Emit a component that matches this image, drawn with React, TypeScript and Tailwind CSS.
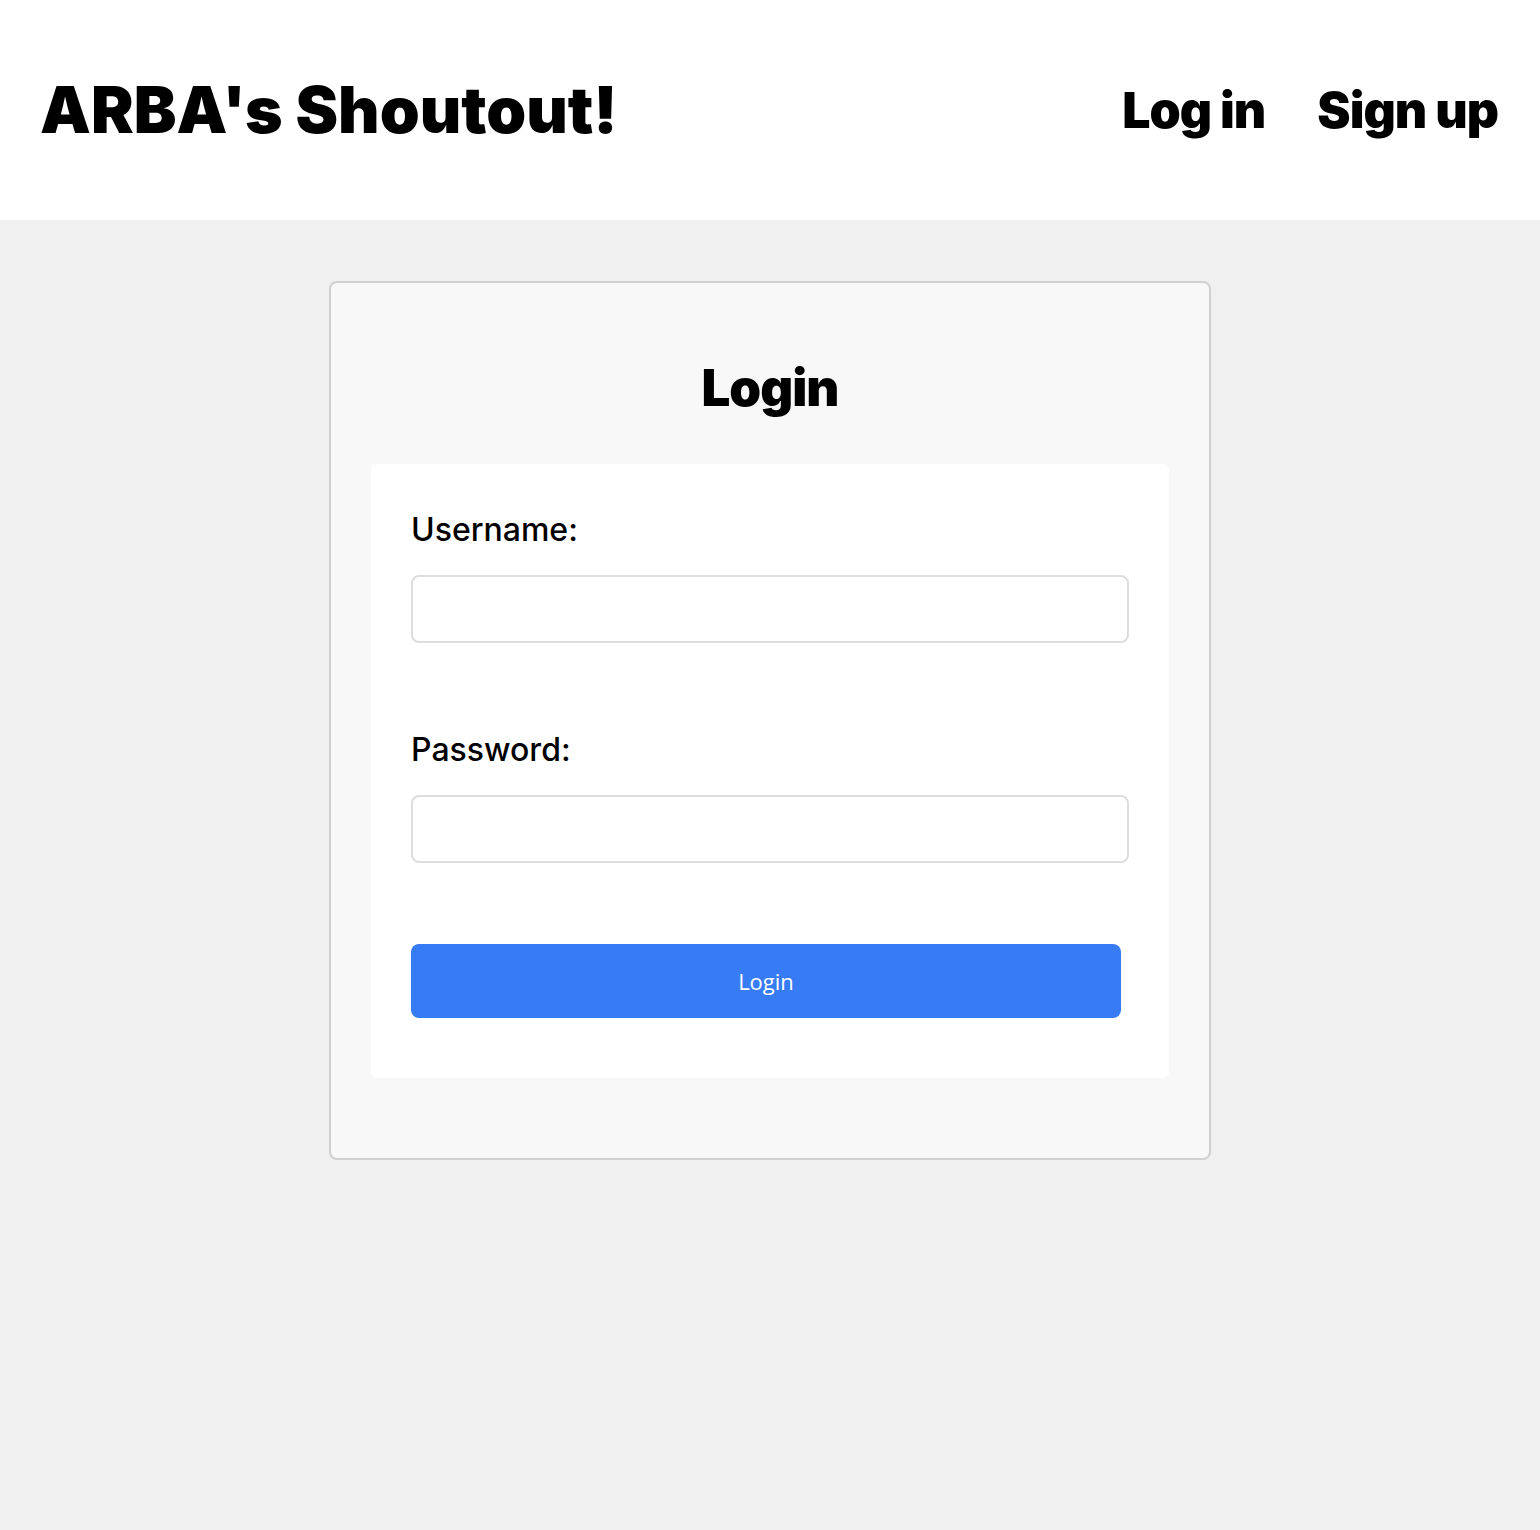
export default function App() {
  return (
    <div className="min-h-[1530px] flex flex-col bg-[#f0f0f0] font-['Inter',sans-serif] text-black">
      <header className="h-[220px] bg-white flex items-center justify-between px-[40px]">
        <h1 className="text-[64px] font-black leading-none">ARBA's Shoutout!</h1>
        <nav className="flex items-center gap-[52px] pr-[2px]">
          <a className="text-[50px] font-black leading-none tracking-[-1px]">Log in</a>
          <a className="text-[50px] font-black leading-none tracking-[-1px]">Sign up</a>
        </nav>
      </header>

      <main className="flex-1 pt-[61px]">
        <div className="w-[882px] mx-auto bg-[#f8f8f8] border-2 border-[#d0d0d0] rounded-[8px] px-[40px] pt-[79px] pb-[80px]">
          <h2 className="text-center text-[51px] font-black leading-none tracking-[-1px]">Login</h2>

          <form className="mt-[51px] bg-white rounded-[6px] px-[40px] pt-[50px] pb-[60px]">
            <label className="block text-[32px] font-medium leading-none">Username:</label>
            <input type="text" className="block w-full h-[68px] mt-[29px] border-2 border-[#dddddd] rounded-[8px] bg-white" />

            <label className="block mt-[91px] text-[32px] font-medium leading-none">Password:</label>
            <input type="password" className="block w-full h-[68px] mt-[29px] border-2 border-[#dddddd] rounded-[8px] bg-white" />

            <button type="button" className="block w-[710px] h-[74px] mt-[81px] rounded-[8px] bg-[#377bf5] text-white text-[22px] font-['Open_Sans',sans-serif]">
              Login
            </button>
          </form>
        </div>
      </main>
    </div>
  );
}
